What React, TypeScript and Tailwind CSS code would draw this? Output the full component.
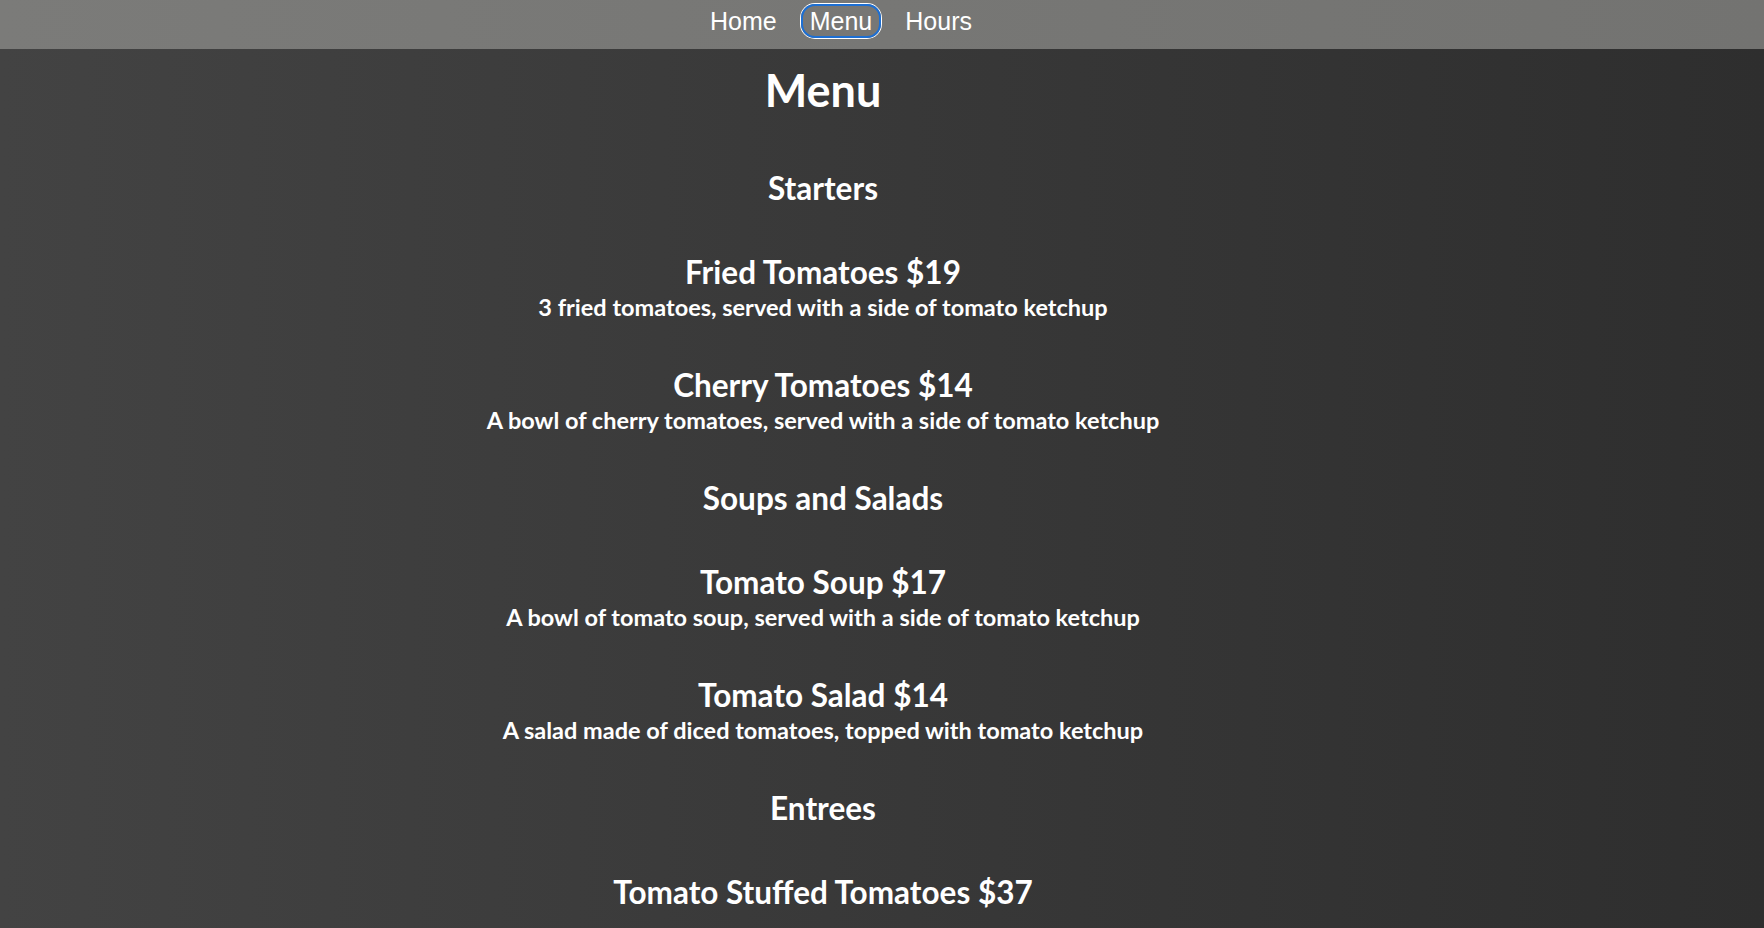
const menu = [
  {
    name: 'Starters',
    items: [
      { title: 'Fried Tomatoes $19', desc: '3 fried tomatoes, served with a side of tomato ketchup' },
      { title: 'Cherry Tomatoes $14', desc: 'A bowl of cherry tomatoes, served with a side of tomato ketchup' },
    ],
  },
  {
    name: 'Soups and Salads',
    items: [
      { title: 'Tomato Soup $17', desc: 'A bowl of tomato soup, served with a side of tomato ketchup' },
      { title: 'Tomato Salad $14', desc: 'A salad made of diced tomatoes, topped with tomato ketchup' },
    ],
  },
  {
    name: 'Entrees',
    items: [{ title: 'Tomato Stuffed Tomatoes $37', desc: '' }],
  },
]

export default function App() {
  return (
    <div className="min-h-screen bg-gradient-to-r from-[#434343] to-[#2e2e2e] text-white">
      <nav className="h-[49px] bg-gradient-to-r from-[#7b7b79] to-[#737371] flex items-start pt-[4px] justify-center gap-4 pr-[82px] font-['Liberation_Sans',Arial,sans-serif] text-[25px]">
        <a className="px-2 leading-[34px]">Home</a>
        <a className="px-[7px] leading-[30px] rounded-[14px] border-2 border-[#1d6fd3] ring-1 ring-white">Menu</a>
        <a className="px-2 leading-[34px]">Hours</a>
      </nav>

      <main className="flex flex-col items-center text-center pr-[118px] font-['Lato',sans-serif] font-bold pb-10">
        <h1 className="mt-[14px] text-[45px] leading-[54px]">Menu</h1>
        {menu.map((section, si) => (
          <section key={section.name} className={si === 0 ? 'mt-[53px]' : 'mt-[47px]'}>
            <h2 className="text-[31.5px] leading-[36px]">{section.name}</h2>
            {section.items.map((item, ii) => (
              <div key={item.title} className={ii === 0 ? 'mt-[49px]' : 'mt-[48px]'}>
                <h3 className="text-[31.5px] leading-[34px]">{item.title}</h3>
                {item.desc && <p className="mt-[5px] text-[23.5px] leading-[26px]">{item.desc}</p>}
              </div>
            ))}
          </section>
        ))}
      </main>
    </div>
  )
}
